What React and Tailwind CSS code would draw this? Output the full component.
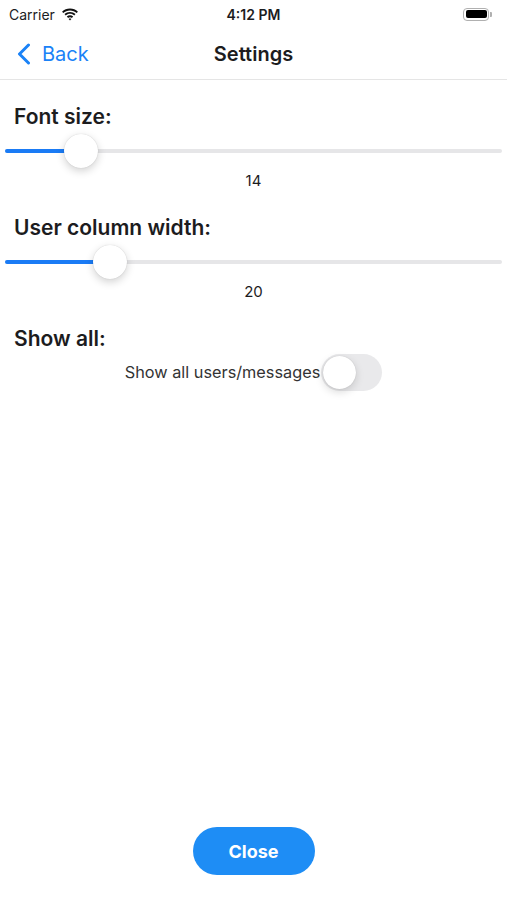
import React from "react";

function Slider({ pct }) {
  return (
    <div className="relative h-[40px] mx-[5px] mt-[2px]">
      <div className="absolute left-0 right-0 top-[18px] h-[4px] rounded-full bg-[#e6e6e8]" />
      <div className="absolute left-0 top-[18px] h-[4px] rounded-full bg-[#1a7bf5]" style={{ width: pct + "px" }} />
      <div
        className="absolute top-[3px] w-[34px] h-[34px] rounded-full bg-white shadow-[0_3px_8px_rgba(0,0,0,0.18),0_0_1px_rgba(0,0,0,0.2)]"
        style={{ left: pct - 17 + "px" }}
      />
    </div>
  );
}

export default function App() {
  return (
    <div className="w-[507px] h-[900px] bg-white flex flex-col text-[#1c1c1e]" style={{ fontFamily: "Inter, 'Noto Sans', sans-serif" }}>
      {/* status bar */}
      <div className="h-[28px] flex items-center justify-between px-[9px] relative">
        <div className="flex items-center gap-[6px]">
          <span className="text-[14px]">Carrier</span>
          <svg width="18" height="13" viewBox="0 0 17 12">
            <path d="M8.5 2.2c2.4 0 4.6 0.9 6.3 2.5l1.2-1.3C14 1.5 11.4 0.4 8.5 0.4S3 1.5 1 3.4l1.2 1.3C3.9 3.1 6.1 2.2 8.5 2.2z" fill="#111" />
            <path d="M8.5 5.4c1.5 0 2.9 0.6 4 1.5l1.2-1.3C12.3 4.4 10.5 3.6 8.5 3.6S4.7 4.4 3.3 5.6l1.2 1.3c1.1-0.9 2.5-1.5 4-1.5z" fill="#111" />
            <path d="M8.5 8.6c0.7 0 1.3 0.2 1.8 0.6l1.2-1.3C10.6 7.2 9.6 6.8 8.5 6.8S6.4 7.2 5.5 7.9l1.2 1.3c0.5-0.4 1.1-0.6 1.8-0.6z" fill="#111" />
            <path d="M8.5 11.6l1.3-1.4c-0.4-0.3-0.8-0.4-1.3-0.4s-0.9 0.1-1.3 0.4z" fill="#111" />
          </svg>
        </div>
        <span className="absolute left-1/2 -translate-x-1/2 text-[14px] font-semibold">4:12 PM</span>
        <div className="flex items-center mr-[6px]">
          <div className="w-[26px] h-[13px] rounded-[4px] border border-[#b0b0b0] p-[1.5px]">
            <div className="w-full h-full rounded-[2px] bg-black" />
          </div>
          <div className="w-[2px] h-[5px] rounded-r-[1px] bg-[#b0b0b0] ml-[1px]" />
        </div>
      </div>

      {/* nav bar */}
      <div className="h-[52px] relative flex items-center border-b border-[#e5e5e5]">
        <div className="flex items-center pl-[16px] gap-[11px] text-[#1a82f7]">
          <svg width="15" height="22" viewBox="0 0 15 22">
            <path d="M12.5 2L3.5 11l9 9" fill="none" stroke="#1a82f7" strokeWidth="3" strokeLinecap="round" strokeLinejoin="round" />
          </svg>
          <span className="text-[20px] leading-none">Back</span>
        </div>
        <span className="absolute left-1/2 -translate-x-1/2 text-[20px] font-semibold">Settings</span>
      </div>

      {/* content */}
      <div className="flex flex-col pt-[25px]">
        <div className="px-[14px] text-[21px] leading-[24px] font-semibold">Font size:</div>
        <Slider pct={76} />
        <div className="text-center text-[15px] leading-[20px]">14</div>

        <div className="mt-[25px] px-[14px] text-[21px] leading-[24px] font-semibold">User column width:</div>
        <Slider pct={105} />
        <div className="text-center text-[15px] leading-[20px]">20</div>

        <div className="mt-[25px] px-[14px] text-[21px] leading-[24px] font-semibold">Show all:</div>
        <div className="mt-[3px] flex items-center justify-center">
          <span className="text-[16.3px] text-[#333]">Show all users/messages</span>
          <div className="relative w-[61px] h-[37px] rounded-full bg-[#e9e9eb] ml-[1px]">
            <div className="absolute left-[2px] top-[2px] w-[33px] h-[33px] rounded-full bg-white shadow-[0_3px_8px_rgba(0,0,0,0.15),0_0_1px_rgba(0,0,0,0.2)]" />
          </div>
        </div>
      </div>

      <div className="mt-auto mb-[25px] flex justify-center">
        <button className="w-[122px] h-[48px] rounded-full bg-[#1e8df5] text-white text-[18px] font-bold">Close</button>
      </div>
    </div>
  );
}
